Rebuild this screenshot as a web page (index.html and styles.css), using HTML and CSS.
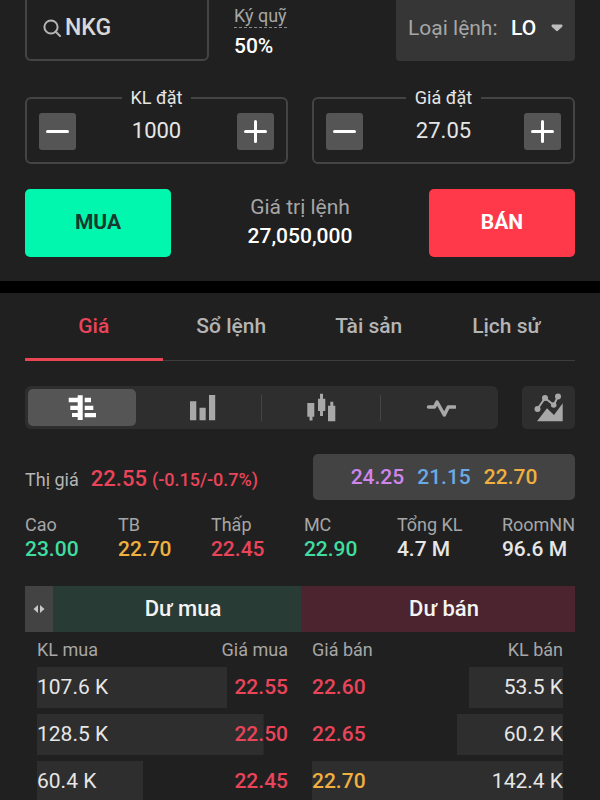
FILE: index.html
```html
<!DOCTYPE html>
<html lang="vi">
<head>
<meta charset="utf-8">
<meta name="viewport" content="width=device-width, initial-scale=1">
<title>NKG</title>
<link rel="stylesheet" href="styles.css">
</head>
<body>
<main class="app">
  <form class="order">
    <div class="order-top">
      <label class="search">
        <svg class="search-icon" viewBox="0 0 18 18" aria-hidden="true"><circle cx="8" cy="8" r="6.6"/><path d="M12.5 12.5 17 17"/></svg>
        <input class="search-input" type="text" value="NKG" aria-label="NKG">
      </label>
      <div class="margin-rate">
        <span class="margin-label">Ký quỹ</span>
        <strong class="margin-value">50%</strong>
      </div>
      <div class="order-type">
        <label class="order-type-label" for="type">Loại lệnh:</label>
        <div class="order-type-pick">
          <select class="order-type-select" id="type"><option>LO</option></select>
          <svg class="caret" viewBox="0 0 12 8" aria-hidden="true"><path d="M1 1h10v1.500L6 7 1 2.500z"/></svg>
        </div>
      </div>
    </div>

    <div class="fields">
      <fieldset class="field">
        <legend class="field-name"><label for="volume">KL đặt</label></legend>
        <div class="stepper">
          <button class="step" type="button" aria-label="−"><svg viewBox="0 0 37 37"><path d="M8.500 18.500h20"/></svg></button>
          <input class="field-value" id="volume" type="text" value="1000">
          <button class="step" type="button" aria-label="+"><svg viewBox="0 0 37 37"><path d="M8.500 18.500h20M18.500 8.500v20"/></svg></button>
        </div>
      </fieldset>
      <fieldset class="field">
        <legend class="field-name"><label for="price">Giá đặt</label></legend>
        <div class="stepper">
          <button class="step" type="button" aria-label="−"><svg viewBox="0 0 37 37"><path d="M8.500 18.500h20"/></svg></button>
          <input class="field-value" id="price" type="text" value="27.05">
          <button class="step" type="button" aria-label="+"><svg viewBox="0 0 37 37"><path d="M8.500 18.500h20M18.500 8.500v20"/></svg></button>
        </div>
      </fieldset>
    </div>

    <div class="actions">
      <button class="action buy" type="button">MUA</button>
      <div class="total">
        <span class="total-label">Giá trị lệnh</span>
        <strong class="total-value">27,050,000</strong>
      </div>
      <button class="action sell" type="button">BÁN</button>
    </div>
  </form>

  <section class="market">
    <nav class="tabs">
      <a class="tab active" href="#gia">Giá</a>
      <a class="tab" href="#so-lenh">Sổ lệnh</a>
      <a class="tab" href="#tai-san">Tài sản</a>
      <a class="tab" href="#lich-su">Lịch sử</a>
    </nav>

    <div class="toolbar">
      <div class="views">
        <button class="view selected" type="button" aria-label="Giá">
          <svg class="icon" viewBox="0 0 30 30"><path d="M10.700 2.300h5V27h-5zM1.700 4.700h9v4.600h-9zM3.300 12.700h8V17h-8zM5 20h6v4H5zM17.700 4.700H24v4.600h-6.300zM17.700 12.700h8.600V17h-8.600zM17.700 20H29v4.300H17.700z"/></svg>
        </button>
        <button class="view" type="button" aria-label="KL">
          <svg class="icon" viewBox="0 0 30 30"><path d="M3 8.300h6.300v19H3zM12.500 14.700h6.200v12.600h-6.200zM22 2h6.200v25.300H22z"/></svg>
        </button>
        <button class="view divided" type="button" aria-label="Nến">
          <svg class="icon" viewBox="0 0 30 30"><path d="M1.300 10h7v13.700H6.500v3.800h-3v-3.800H1.300zM14 .7h3v5h2.300V18H17v5h-3v-5h-2V5.700h2zM24.300 8.700h3v4h2v15.600H22V12.700h2.300z"/></svg>
        </button>
        <button class="view divided" type="button" aria-label="Khớp">
          <svg class="icon line" viewBox="0 0 30 30"><path d="M2.500 14h6L11 9l7.300 13 4-8h6.500"/></svg>
        </button>
      </div>
      <button class="chart" type="button" aria-label="Biểu đồ">
        <svg class="icon" viewBox="0 0 30 30"><path d="M3 28.300 13 15.300l7 6.700 8.700-11.700v18z"/><circle cx="3.500" cy="16" r="3"/><circle cx="11" cy="5" r="3"/><circle cx="19.700" cy="12" r="2.800"/><circle cx="24" cy="3.600" r="3"/><path class="link" d="M3.500 16 11 5l8.700 7L24 3.600"/></svg>
      </button>
    </div>

    <div class="quote">
      <div class="last">
        <span class="last-label">Thị giá</span>
        <span class="last-price">22.55</span>
        <span class="last-change">(-0.15/-0.7%)</span>
      </div>
      <div class="limits">
        <span class="violet">24.25</span>
        <span class="blue">21.15</span>
        <span class="amber">22.70</span>
      </div>
    </div>

    <dl class="stats">
      <div><dt>Cao</dt><dd class="green">23.00</dd></div>
      <div><dt>TB</dt><dd class="amber">22.70</dd></div>
      <div><dt>Thấp</dt><dd class="red">22.45</dd></div>
      <div><dt>MC</dt><dd class="green">22.90</dd></div>
      <div><dt>Tổng KL</dt><dd>4.7 M</dd></div>
      <div><dt>RoomNN</dt><dd>96.6 M</dd></div>
    </dl>

    <div class="book-head">
      <button class="swap" type="button" aria-label="◂▸"><svg viewBox="0 0 12 10"><path d="M5 1v8L.5 5zM7 1v8l4.500-4z"/></svg></button>
      <h2 class="side bid">Dư mua</h2>
      <h2 class="side ask">Dư bán</h2>
    </div>
    <div class="book">
      <table class="depth bids">
        <thead><tr><th>KL mua</th><th>Giá mua</th></tr></thead>
        <tbody>
          <tr style="--size: 75.6%"><td>107.6 K</td><td class="price red">22.55</td></tr>
          <tr style="--size: 90.2%"><td>128.5 K</td><td class="price red">22.50</td></tr>
          <tr style="--size: 42.4%"><td>60.4 K</td><td class="price red">22.45</td></tr>
        </tbody>
      </table>
      <table class="depth asks">
        <thead><tr><th>Giá bán</th><th>KL bán</th></tr></thead>
        <tbody>
          <tr style="--size: 37.6%"><td class="price red">22.60</td><td>53.5 K</td></tr>
          <tr style="--size: 42.3%"><td class="price red">22.65</td><td>60.2 K</td></tr>
          <tr style="--size: 100%"><td class="price amber">22.70</td><td>142.4 K</td></tr>
        </tbody>
      </table>
    </div>
  </section>
</main>
</body>
</html>
```
FILE: styles.css
```css
:root {
  --bg: #202020;
  --panel: #2e2e2e;
  --line: #444;
  --muted: #a6a6a6;
  --text: #e6e6e6;
  --red: #e9445a;
  --green: #3fdda0;
  --amber: #f0b03f;
}

* {
  box-sizing: border-box;
}

html {
  scrollbar-width: none;
  background: var(--bg);
}

body {
  margin: 0;
  font-family: Roboto, "Noto Sans", sans-serif;
  font-size: 21px;
  color: var(--text);
}

button,
input,
select {
  margin: 0;
  padding: 0;
  border: 0;
  font: inherit;
  color: inherit;
  background: none;
}

strong {
  font-weight: 500;
}

.red { color: var(--red); }
.green { color: var(--green); }
.amber { color: var(--amber); }
.violet { color: #cf86ec; }
.blue { color: #6aaae6; }

/* Order form */
.order {
  padding: 0 25px 24px;
  border-bottom: 12px solid #000;
}

.order-top {
  display: grid;
  grid-template-columns: 184fr 187fr 179fr;
  height: 61px;
}

.search {
  display: flex;
  align-items: center;
  gap: 4px;
  padding: 0 16px 4px;
  border: 2px solid var(--line);
  border-top: 0;
  border-radius: 0 0 6px 6px;
}

.search-icon {
  flex: none;
  width: 18px;
  height: 18px;
  fill: none;
  stroke: #b4b4b4;
  stroke-width: 2;
  stroke-linecap: round;
}

.search-input {
  min-width: 0;
  width: 100%;
  font-size: 23px;
  font-weight: 500;
  color: #d8d8d8;
}

.margin-rate {
  display: flex;
  flex-direction: column;
  align-items: flex-start;
  padding: 4px 0 0 25px;
}

.margin-label {
  border-bottom: 1px dashed #8a8a8a;
  font-size: 18px;
  line-height: 23px;
  color: var(--muted);
}

.margin-value {
  margin-top: 4px;
  line-height: 28px;
  color: #fff;
}

.order-type {
  display: flex;
  align-items: center;
  justify-content: space-between;
  padding: 0 12px 6px;
  border-radius: 0 0 4px 4px;
  background: #363636;
}

.order-type-label {
  white-space: nowrap;
  color: var(--muted);
}

.order-type-pick {
  position: relative;
}

.order-type-select {
  appearance: none;
  padding-right: 38px;
  margin-right: -12px;
  font-weight: 500;
  color: #fff;
}

.caret {
  position: absolute;
  top: 0;
  bottom: 0;
  right: 0;
  margin: auto 0;
  width: 12px;
  height: 8px;
  fill: #bdbdbd;
  stroke: #bdbdbd;
  stroke-linejoin: round;
  pointer-events: none;
}

.fields {
  display: grid;
  grid-template-columns: 1fr 1fr;
  gap: 24px;
  margin-top: 26px;
}

.field {
  min-width: 0;
  margin: 0;
  padding: 4px 12px 12px;
  border: 2px solid var(--line);
  border-radius: 6px;
}

.field-name {
  margin: 0 auto;
  padding: 0 9px;
  font-size: 18px;
  line-height: 22px;
}

.stepper {
  display: flex;
  align-items: center;
}

.step {
  flex: none;
  width: 37px;
  height: 37px;
  border-radius: 3px;
  background: #555;
}

.step svg {
  display: block;
  fill: none;
  stroke: #fff;
  stroke-width: 3;
  stroke-linecap: round;
}

.field-value {
  flex: 1;
  min-width: 0;
  padding-bottom: 2px;
  font-size: 22px;
  text-align: center;
}

.actions {
  display: grid;
  grid-template-columns: 146fr 258fr 146fr;
  align-items: center;
  margin-top: 25px;
}

.action {
  height: 68px;
  padding-bottom: 2px;
  border-radius: 5px;
  font-weight: 700;
}

.buy {
  background: #00f7ad;
  color: #173a30;
}

.sell {
  background: #ff394a;
  color: #fff;
}

.total {
  display: flex;
  flex-direction: column;
  align-items: center;
  padding-bottom: 2px;
  line-height: 29px;
}

.total-label {
  color: var(--muted);
}

.total-value {
  color: #fff;
}

/* Market data */
.market {
  padding: 0 25px;
}

.tabs {
  display: grid;
  grid-template-columns: repeat(4, 1fr);
  box-shadow: inset 0 -1px #3c3c3c;
}

.tab {
  padding-top: 1px;
  border-bottom: 3px solid transparent;
  font-weight: 500;
  line-height: 64px;
  text-align: center;
  text-decoration: none;
  color: #b4b4b4;
}

.tab.active {
  border-color: #e94552;
  color: var(--red);
}

.toolbar {
  display: flex;
  gap: 24px;
  height: 43px;
  margin-top: 25px;
}

.views {
  flex: 1;
  display: grid;
  grid-template-columns: repeat(4, 1fr);
  gap: 12px;
  padding: 3px;
  border-radius: 6px;
  background: var(--panel);
}

.view,
.chart {
  display: flex;
  align-items: center;
  justify-content: center;
  border-radius: 5px;
}

.view {
  position: relative;
}

.view.selected {
  background: #555;
}

.view.divided::before {
  content: "";
  position: absolute;
  left: -7px;
  width: 1px;
  height: 26px;
  background: #454545;
}

.chart {
  width: 53px;
  background: var(--panel);
}

.icon {
  width: 30px;
  height: 30px;
  fill: #a8a8a8;
}

.selected .icon {
  fill: #fff;
}

.icon.line,
.link {
  fill: none;
  stroke: #a8a8a8;
  stroke-linecap: round;
  stroke-linejoin: round;
}

.icon.line {
  stroke-width: 3.5;
}

.link {
  stroke-width: 2;
}

.quote {
  display: grid;
  grid-template-columns: 288fr 262fr;
  align-items: center;
  margin-top: 25px;
}

.last {
  display: flex;
  align-items: baseline;
  padding-top: 2px;
  white-space: nowrap;
  color: var(--red);
}

.last-label {
  margin-right: 12px;
  font-size: 18px;
  color: #b4b4b4;
}

.last-price {
  margin-right: 5px;
  font-size: 22px;
  font-weight: 500;
}

.last-change {
  font-size: 18px;
  font-weight: 500;
}

.limits {
  display: flex;
  justify-content: center;
  gap: 13px;
  border-radius: 5px;
  background: #434343;
  font-weight: 500;
  line-height: 46px;
}

.stats {
  display: flex;
  justify-content: space-between;
  margin: 13px 0 25px;
  line-height: 24px;
}

.stats dt {
  font-size: 18px;
  color: var(--muted);
}

.stats dd {
  margin: 0;
  font-weight: 500;
}

.book-head {
  display: grid;
  grid-template-columns: 28px 248fr 274fr;
}

.swap {
  display: flex;
  align-items: center;
  justify-content: center;
  background: #434343;
}

.swap svg {
  width: 12px;
  height: 10px;
  fill: #c8c8c8;
}

.side {
  margin: 0;
  padding-left: 12px;
  font-size: 22px;
  font-weight: 500;
  line-height: 46px;
  text-align: center;
  color: #f4f4f4;
}

.bid { background: #293b35; }
.ask { background: #4b242f; }

.book {
  display: grid;
  grid-template-columns: 1fr 1fr;
  gap: 24px;
  padding: 0 12px;
}

.depth {
  width: 100%;
  border-spacing: 0 6px;
}

.depth th,
.depth td {
  padding: 0;
  text-align: left;
}

.depth th {
  height: 23px;
  font-size: 18px;
  font-weight: 400;
  line-height: 23px;
  color: var(--muted);
}

.depth td {
  height: 41px;
  padding-bottom: 1px;
  line-height: 40px;
}

.depth th:last-child,
.depth td:last-child {
  text-align: right;
}

.depth .price {
  font-weight: 500;
}

.depth tbody tr {
  background: linear-gradient(var(--panel), var(--panel)) left / var(--size) 100% no-repeat;
}

.asks tbody tr {
  background-position: right;
}
```
